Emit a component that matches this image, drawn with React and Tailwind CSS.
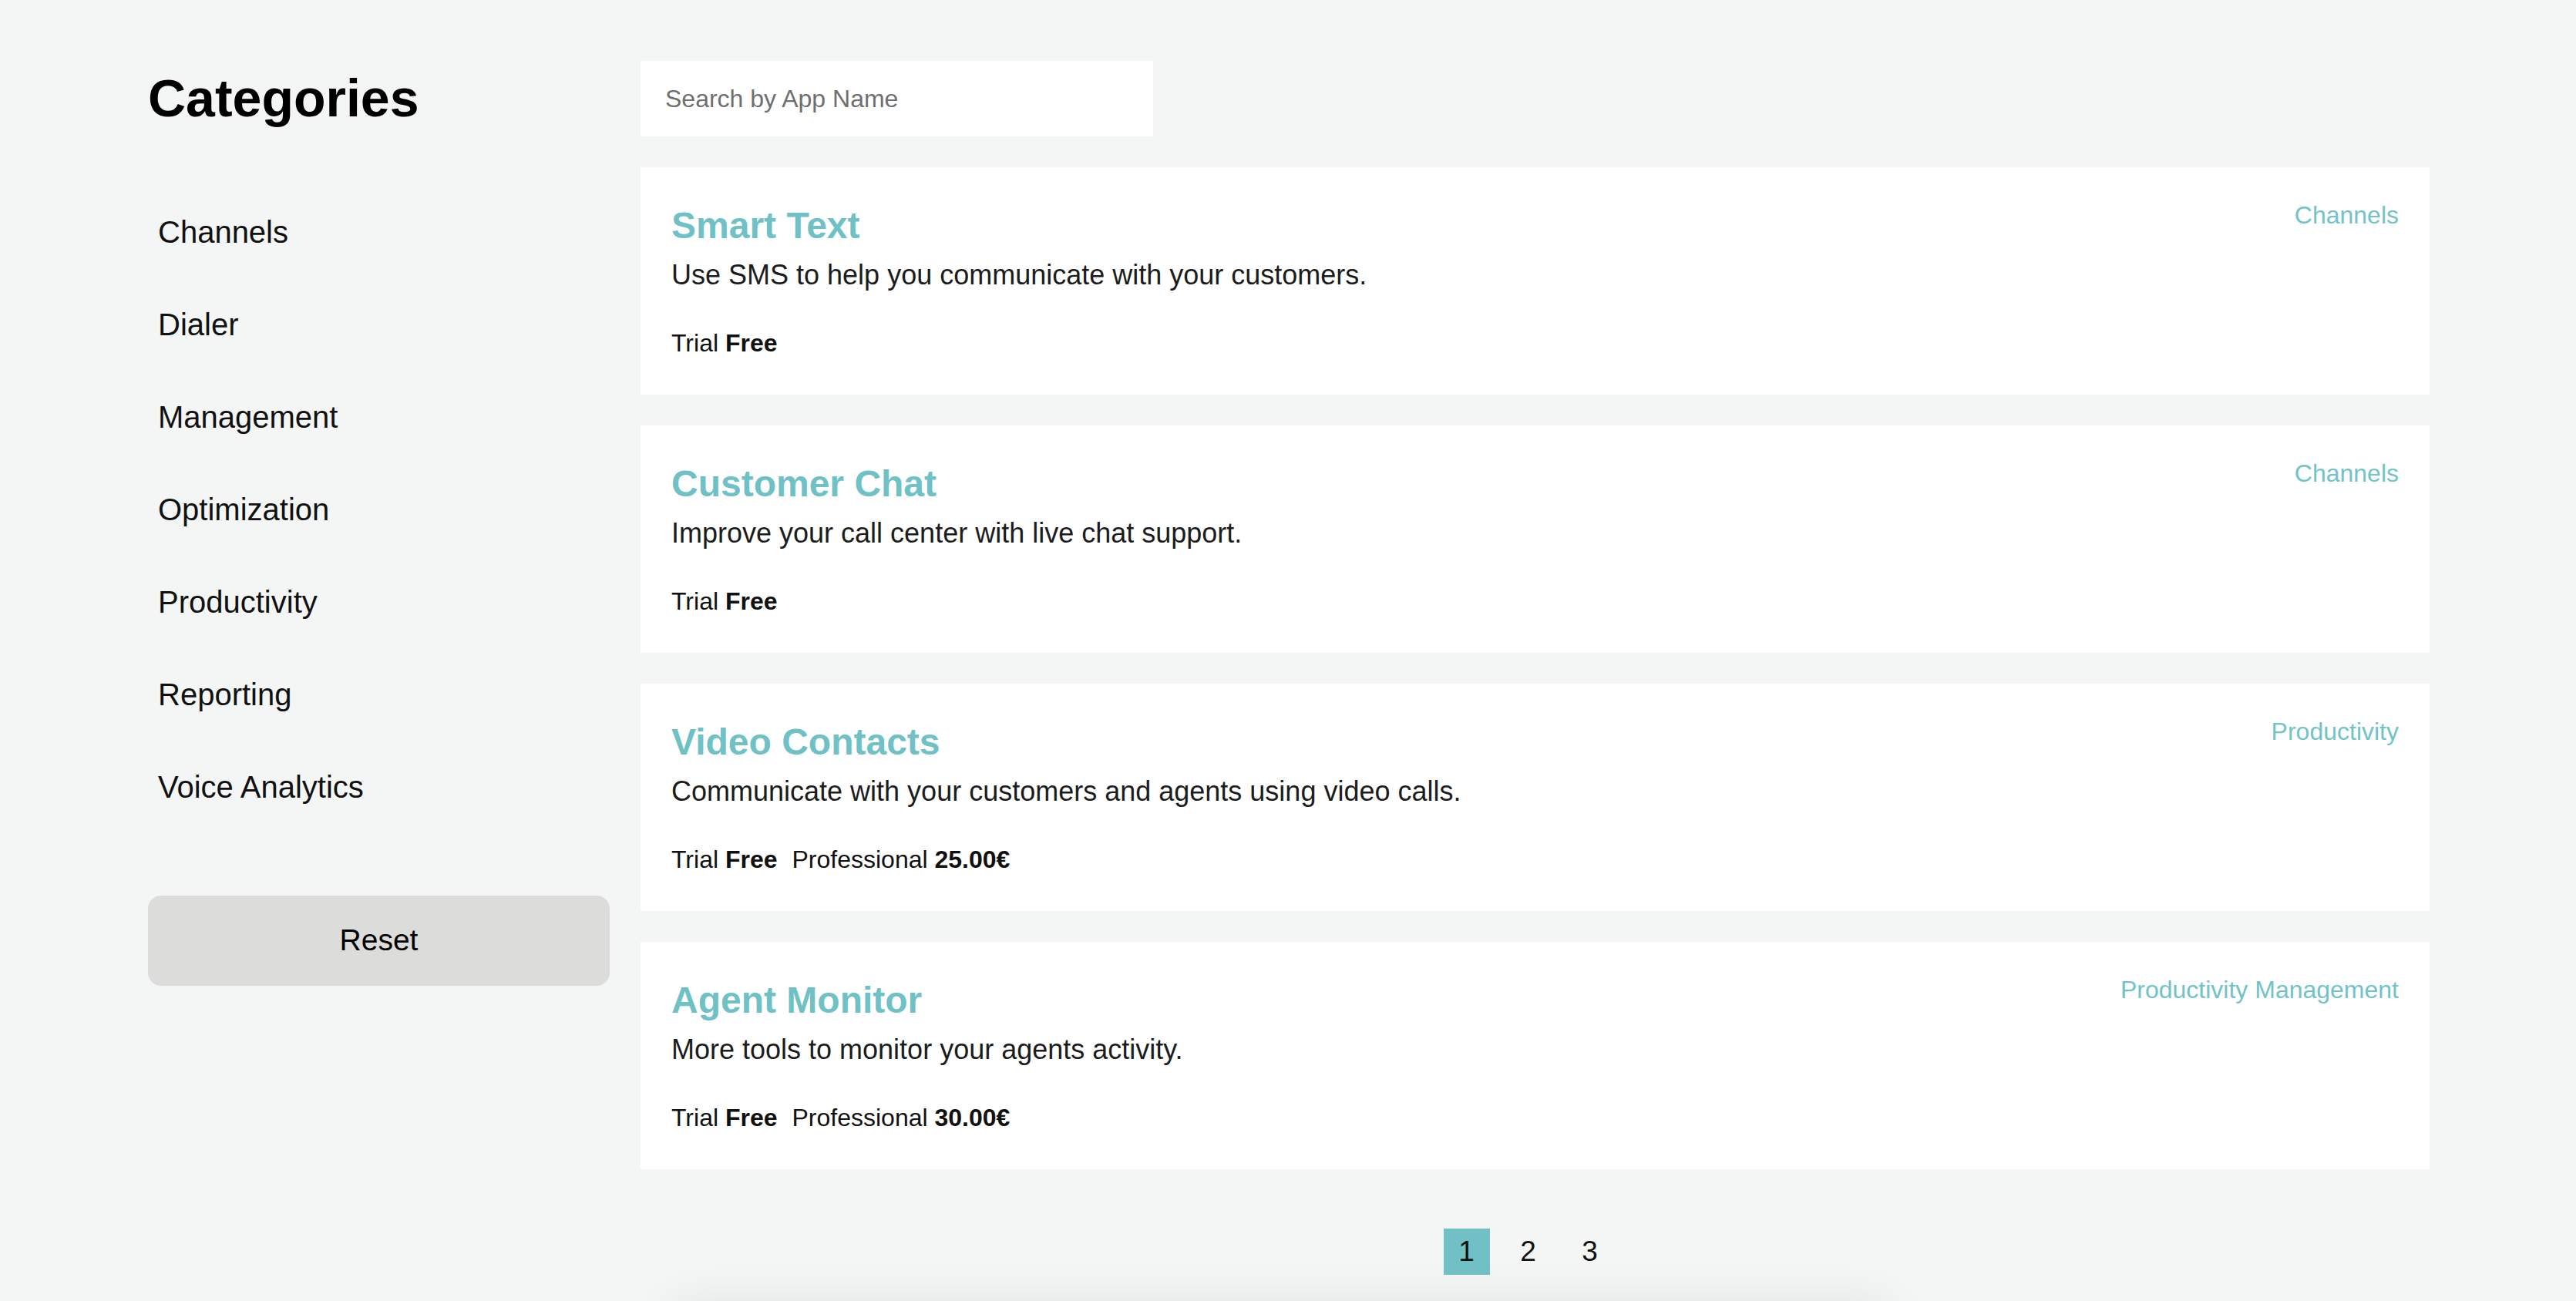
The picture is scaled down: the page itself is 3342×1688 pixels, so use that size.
import React from 'react';

const categories = ['Channels', 'Dialer', 'Management', 'Optimization', 'Productivity', 'Reporting', 'Voice Analytics'];

const apps = [
    { id: 1, name: 'Smart Text', description: 'Use SMS to help you communicate with your customers.', tags: 'Channels', plans: [{ label: 'Trial', price: 'Free' }] },
    { id: 2, name: 'Customer Chat', description: 'Improve your call center with live chat support.', tags: 'Channels', plans: [{ label: 'Trial', price: 'Free' }] },
    { id: 3, name: 'Video Contacts', description: 'Communicate with your customers and agents using video calls.', tags: 'Productivity', plans: [{ label: 'Trial', price: 'Free' }, { label: 'Professional', price: '25.00€' }] },
    { id: 4, name: 'Agent Monitor', description: 'More tools to monitor your agents activity.', tags: 'Productivity Management', plans: [{ label: 'Trial', price: 'Free' }, { label: 'Professional', price: '30.00€' }] },
];

const AppCard = ({ app }) => (
    <div className="flex h-[295px] items-start justify-between bg-white px-[40px] pt-[42px]">
        <div className="pt-[5px]">
            <h3 className="text-[48px] leading-[58px] font-bold text-[#6fc1c6]">{app.name}</h3>
            <p className="mt-[12px] text-[36px] leading-[46px] text-[#1c1c1c]">{app.description}</p>
            <div className="mt-[45px] flex text-[32px] leading-[40px] text-[#111]">
                {app.plans.map((plan, i) => (
                    <span key={plan.label} className={i > 0 ? 'ml-[19px]' : ''}>
                        {plan.label} <b className="font-bold">{plan.price}</b>
                    </span>
                ))}
            </div>
        </div>
        <span className="text-[32px] leading-[40px] text-[#72c3c8]">{app.tags}</span>
    </div>
);

export default function App() {
    return (
        <div className="h-[1688px] overflow-hidden bg-[#f4f6f5] font-['Liberation_Sans',Arial,sans-serif]">
            <div className="flex gap-[40px] pr-[190px] pl-[192px] pt-[79px]">
                {/* Sidebar */}
                <aside className="w-[599px] shrink-0">
                    <h2 className="mt-[9px] text-[68px] leading-[78px] font-bold text-black">Categories</h2>
                    <ul className="mt-[75px] pl-[13px]">
                        {categories.map((c) => (
                            <li key={c} className="text-[40px] leading-[120px] text-[#111]">{c}</li>
                        ))}
                    </ul>
                    <button className="mt-[81px] h-[117px] w-full rounded-[17px] bg-[#dcdddb] text-[39px] text-black">
                        Reset
                    </button>
                </aside>

                {/* Main */}
                <main className="flex-1">
                    <div className="flex flex-col gap-[40px]">
                        <input
                            type="text"
                            placeholder="Search by App Name"
                            className="h-[98px] w-[665px] bg-white pl-[32px] text-[32px] text-[#333] outline-none placeholder:text-[#6f6f6f]"
                        />
                        {apps.map((app) => (
                            <AppCard key={app.id} app={app} />
                        ))}
                    </div>

                    <div className="mt-[77px] flex justify-center gap-[20px] pr-[18px]">
                        {[1, 2, 3].map((n) => (
                            <span
                                key={n}
                                className={`flex h-[60px] w-[60px] items-center justify-center text-[37px] text-[#111] ${n === 1 ? 'bg-[#70c0c6]' : ''}`}
                            >
                                {n}
                            </span>
                        ))}
                    </div>

                    {/* footer panel, sits just below the fold */}
                    <div className="mt-[41px] ml-[43px] h-[200px] w-[1577px] bg-[#f4f6f5] shadow-[0_0_60px_rgba(0,0,0,0.09)]" />
                </main>
            </div>
        </div>
    );
}
